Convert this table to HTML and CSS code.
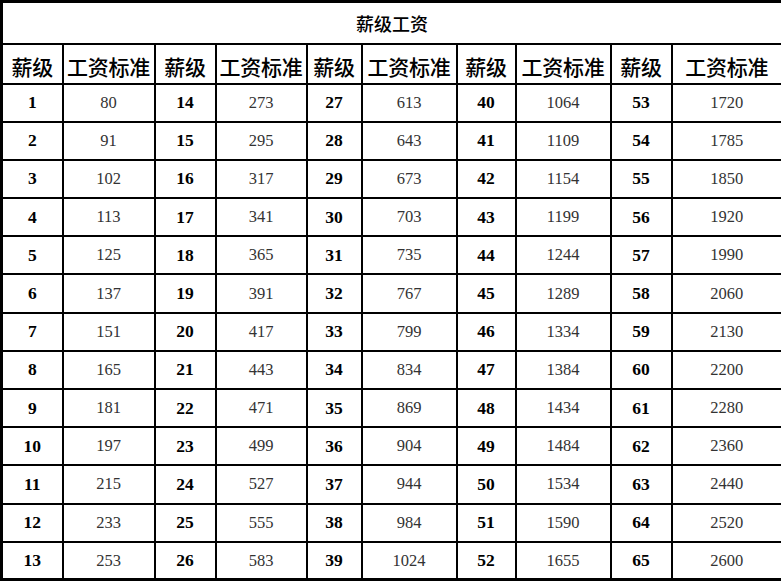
FILE: index.html
```html
<!DOCTYPE html>
<html lang="zh">
<head>
<meta charset="utf-8">
<title>薪级工资</title>
<link rel="stylesheet" href="styles.css">
</head>
<body>
<table class="pay">
<colgroup>
<col class="c1"><col class="c2"><col class="c3"><col class="c4"><col class="c5"><col class="c6"><col class="c7"><col class="c8"><col class="c9"><col class="c10">
</colgroup>
<thead>
<tr class="title-row"><th colspan="10" class="title">薪级工资</th></tr>
<tr class="head-row">
<th>薪级</th><th>工资标准</th><th>薪级</th><th>工资标准</th><th>薪级</th><th>工资标准</th><th>薪级</th><th>工资标准</th><th>薪级</th><th>工资标准</th>
</tr>
</thead>
<tbody>
<tr><td class="lv">1</td><td class="amt">80</td><td class="lv">14</td><td class="amt">273</td><td class="lv">27</td><td class="amt">613</td><td class="lv">40</td><td class="amt">1064</td><td class="lv">53</td><td class="amt">1720</td></tr>
<tr><td class="lv">2</td><td class="amt">91</td><td class="lv">15</td><td class="amt">295</td><td class="lv">28</td><td class="amt">643</td><td class="lv">41</td><td class="amt">1109</td><td class="lv">54</td><td class="amt">1785</td></tr>
<tr><td class="lv">3</td><td class="amt">102</td><td class="lv">16</td><td class="amt">317</td><td class="lv">29</td><td class="amt">673</td><td class="lv">42</td><td class="amt">1154</td><td class="lv">55</td><td class="amt">1850</td></tr>
<tr><td class="lv">4</td><td class="amt">113</td><td class="lv">17</td><td class="amt">341</td><td class="lv">30</td><td class="amt">703</td><td class="lv">43</td><td class="amt">1199</td><td class="lv">56</td><td class="amt">1920</td></tr>
<tr><td class="lv">5</td><td class="amt">125</td><td class="lv">18</td><td class="amt">365</td><td class="lv">31</td><td class="amt">735</td><td class="lv">44</td><td class="amt">1244</td><td class="lv">57</td><td class="amt">1990</td></tr>
<tr><td class="lv">6</td><td class="amt">137</td><td class="lv">19</td><td class="amt">391</td><td class="lv">32</td><td class="amt">767</td><td class="lv">45</td><td class="amt">1289</td><td class="lv">58</td><td class="amt">2060</td></tr>
<tr><td class="lv">7</td><td class="amt">151</td><td class="lv">20</td><td class="amt">417</td><td class="lv">33</td><td class="amt">799</td><td class="lv">46</td><td class="amt">1334</td><td class="lv">59</td><td class="amt">2130</td></tr>
<tr><td class="lv">8</td><td class="amt">165</td><td class="lv">21</td><td class="amt">443</td><td class="lv">34</td><td class="amt">834</td><td class="lv">47</td><td class="amt">1384</td><td class="lv">60</td><td class="amt">2200</td></tr>
<tr><td class="lv">9</td><td class="amt">181</td><td class="lv">22</td><td class="amt">471</td><td class="lv">35</td><td class="amt">869</td><td class="lv">48</td><td class="amt">1434</td><td class="lv">61</td><td class="amt">2280</td></tr>
<tr><td class="lv">10</td><td class="amt">197</td><td class="lv">23</td><td class="amt">499</td><td class="lv">36</td><td class="amt">904</td><td class="lv">49</td><td class="amt">1484</td><td class="lv">62</td><td class="amt">2360</td></tr>
<tr><td class="lv">11</td><td class="amt">215</td><td class="lv">24</td><td class="amt">527</td><td class="lv">37</td><td class="amt">944</td><td class="lv">50</td><td class="amt">1534</td><td class="lv">63</td><td class="amt">2440</td></tr>
<tr><td class="lv">12</td><td class="amt">233</td><td class="lv">25</td><td class="amt">555</td><td class="lv">38</td><td class="amt">984</td><td class="lv">51</td><td class="amt">1590</td><td class="lv">64</td><td class="amt">2520</td></tr>
<tr><td class="lv">13</td><td class="amt">253</td><td class="lv">26</td><td class="amt">583</td><td class="lv">39</td><td class="amt">1024</td><td class="lv">52</td><td class="amt">1655</td><td class="lv">65</td><td class="amt">2600</td></tr>
</tbody>
</table>
</body>
</html>
```

FILE: styles.css
```css
html, body {
  margin: 0;
  padding: 0;
  background: #fff;
}

.pay {
  width: 781px;
  border-collapse: collapse;
  table-layout: fixed;
  border: 3px solid #000;
  color: #000;
}

.c1 { width: 61px; }
.c2 { width: 92px; }
.c3 { width: 61px; }
.c4 { width: 91px; }
.c5 { width: 55px; }
.c6 { width: 95px; }
.c7 { width: 59px; }
.c8 { width: 95px; }
.c9 { width: 61px; }
.c10 { width: 111px; }

.pay th,
.pay td {
  border: 2px solid #000;
  padding: 0;
  text-align: center;
  vertical-align: middle;
  overflow: hidden;
  white-space: nowrap;
}

.title-row { height: 42px; }
.head-row { height: 40px; }
.pay tbody tr { height: 38.2px; }

.title {
  font-family: "Noto Sans CJK SC", sans-serif;
  font-size: 18px;
  font-weight: 500;
  padding-top: 2px;
}

.head-row th {
  font-family: "Noto Sans CJK SC", sans-serif;
  font-size: 21px;
  font-weight: 500;
  letter-spacing: -0.3px;
  padding-top: 4px;
}

.lv {
  font-family: "Liberation Serif", serif;
  font-weight: 700;
  font-size: 17.5px;
  padding-top: 3px;
}

.amt {
  font-family: "Liberation Serif", serif;
  font-weight: 400;
  font-size: 16.5px;
  color: #333;
  padding-top: 2px;
}
```
